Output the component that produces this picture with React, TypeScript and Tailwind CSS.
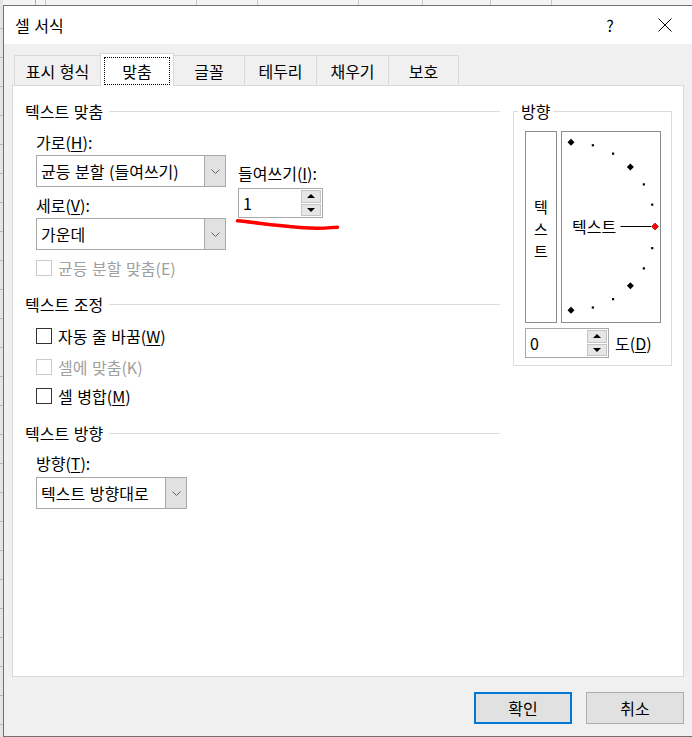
import React from 'react';

const font = "font-['Noto_Sans_CJK_KR','Noto_Sans',sans-serif]";

function Chevron() {
  return (
    <svg width="9" height="5" viewBox="0 0 9 5">
      <polyline points="0.5,0.5 4.5,4.5 8.5,0.5" fill="none" stroke="#606060" strokeWidth="1" />
    </svg>
  );
}

function Arrow({ up }: { up?: boolean }) {
  return (
    <svg width="8" height="4" viewBox="0 0 8 4">
      <polygon points={up ? '0,4 8,4 4,0' : '0,0 8,0 4,4'} fill="#000" />
    </svg>
  );
}

function Select({ value, width }: { value: string; width: string }) {
  return (
    <div className={`flex h-[32px] ${width} border border-[#a9a9a9] bg-white`}>
      <div className="flex flex-1 items-center pl-[4px]">{value}</div>
      <div className="flex w-[21px] items-center justify-center border-l border-[#a9a9a9] bg-[#e1e1e1]">
        <Chevron />
      </div>
    </div>
  );
}

function Spin({ value, width }: { value: string; width: string }) {
  return (
    <div className={`flex h-[30px] ${width} border border-[#a9a9a9] bg-white`}>
      <div className="flex flex-1 items-center pl-[4px]">{value}</div>
      <div className="flex w-[21px] flex-col gap-px py-px pr-px">
        <div className="flex flex-1 items-center justify-center border border-[#c4c4c4] bg-[#e6e6e6]">
          <Arrow up />
        </div>
        <div className="flex flex-1 items-center justify-center border border-[#c4c4c4] bg-[#e6e6e6]">
          <Arrow />
        </div>
      </div>
    </div>
  );
}

function Heading({ text, className }: { text: string; className: string }) {
  return (
    <div className={`flex h-[20px] items-center ${className}`}>
      <span>{text}</span>
      <div className="ml-[6px] h-px flex-1 bg-[#dcdcdc]" />
    </div>
  );
}

function Check({
  label,
  hotkey,
  rest,
  disabled,
  className,
}: {
  label: string;
  hotkey?: string;
  rest?: string;
  disabled?: boolean;
  className: string;
}) {
  return (
    <div className={`flex h-[20px] items-center pl-[11px] ${className}`}>
      <div
        className={`h-[16px] w-[16px] border bg-white ${
          disabled ? 'border-[#cccccc]' : 'border-[#333333]'
        }`}
      />
      <span className={`ml-[6px] ${disabled ? 'text-[#a0a0a0]' : ''}`}>
        {label}
        {hotkey && <span className="underline underline-offset-2">{hotkey}</span>}
        {rest}
      </span>
    </div>
  );
}

function Tab({
  label,
  width,
  noLeft,
  last,
}: {
  label: string;
  width: string;
  noLeft?: boolean;
  last?: boolean;
}) {
  return (
    <div
      className={`mb-px flex h-[30px] ${width} items-center justify-center border-t border-[#d9d9d9] bg-[#f0f0f0] ${
        noLeft ? '' : 'border-l'
      } ${last ? 'border-r' : ''}`}
    >
      {label}
    </div>
  );
}

const smallDots = [75, 60, 30, 15, -15, -30, -60, -75];
const bigDots = [90, 45, -45, -90];

function Dial() {
  const cx = 9;
  const cy = 94.3;
  const r = 84;
  return (
    <div className="relative ml-[4px] h-[192px] w-[100px] border border-[#8c8c8c] bg-white">
      <svg className="absolute inset-0" width="98" height="190" viewBox="0 0 98 190">
        {smallDots.map((a) => {
          const x = cx + r * Math.cos((a * Math.PI) / 180);
          const y = cy - r * Math.sin((a * Math.PI) / 180);
          return <rect key={a} x={x - 1} y={y - 1} width="2.2" height="2.2" fill="#000" />;
        })}
        {bigDots.map((a) => {
          const x = cx + r * Math.cos((a * Math.PI) / 180);
          const y = cy - r * Math.sin((a * Math.PI) / 180);
          return (
            <polygon
              key={a}
              points={`${x},${y - 3.5} ${x + 3.5},${y} ${x},${y + 3.5} ${x - 3.5},${y}`}
              fill="#000"
            />
          );
        })}
        <line x1="58.5" y1="94.5" x2="89" y2="94.5" stroke="#000" strokeWidth="1" />
        <polygon points="93,91 96.5,94.5 93,98 89.5,94.5" fill="#ff0000" stroke="#8a0000" strokeWidth="0.6" />
      </svg>
      <span className="absolute left-[10px] top-[84px] leading-[20px]">텍스트</span>
    </div>
  );
}

export default function App() {
  return (
    <div
      className={`relative h-[737px] w-[692px] overflow-hidden bg-[#ececec] text-[16px] leading-[20px] text-black [word-spacing:1px] ${font}`}
    >
      {/* spreadsheet behind the dialog */}
      <div className="flex h-[5px] bg-[#f4f4f4]">
        <div className="ml-[35px] h-full w-px bg-[#b0b0b0]" />
        <div className="ml-[9px] h-full w-px bg-[#c8c8c8]" />
        <div className="ml-[150px] h-full w-px bg-[#c8c8c8]" />
        <div className="ml-[60px] h-full w-px bg-[#c8c8c8]" />
        <div className="ml-[100px] h-full w-px bg-[#c8c8c8]" />
        <div className="ml-[63px] h-full w-px bg-[#c8c8c8]" />
        <div className="ml-[67px] h-full w-px bg-[#c8c8c8]" />
        <div className="ml-[60px] h-full w-px bg-[#c8c8c8]" />
      </div>
      <div className="absolute left-0 top-0 flex h-full w-[3px] flex-col bg-[#e4e4e4]">
        {Array.from({ length: 25 }).map((_, i) => (
          <div key={i} className="mt-[28px] h-px w-full bg-[#b8b8b8]" />
        ))}
      </div>

      <div className="ml-[3px] flex h-[732px] w-[700px] flex-col border-y border-l border-[#707070]">
        <div className="flex h-[38px] items-center bg-white pl-[11px]">
          <span>셀 서식</span>
          <div className="flex-1" />
          <div className="flex w-[46px] justify-center">?</div>
          <div className="ml-[9px] flex w-[46px] justify-center">
            <svg width="14" height="14" viewBox="0 0 14 14">
              <path d="M0.5 0.5 L13.5 13.5 M13.5 0.5 L0.5 13.5" stroke="#000" strokeWidth="1" />
            </svg>
          </div>
          <div className="w-[15px]" />
        </div>

        <div className="flex flex-1 flex-col bg-[#f0f0f0] pl-[8px] pt-[9px]">
          <div className="relative z-10 -mb-px flex h-[33px] items-end pl-[2px]">
            <Tab label="표시 형식" width="w-[86px]" />
            <div className="flex h-[33px] w-[74px] border-x border-t border-[#d9d9d9] bg-white px-[3px] pb-[1px] pt-[3px]">
              <div className="flex flex-1 items-center justify-center border border-dotted border-black">
                맞춤
              </div>
            </div>
            <Tab label="글꼴" width="w-[70px]" noLeft />
            <Tab label="테두리" width="w-[72px]" />
            <Tab label="채우기" width="w-[72px]" />
            <Tab label="보호" width="w-[71px]" last />
          </div>

          <div className="flex h-[592px] w-[672px] border border-[#d9d9d9] bg-white pl-[12px]">
            <div className="flex w-[475px] flex-col">
              <Heading className="mt-[15px]" text="텍스트 맞춤" />
              <div className="mt-[11px] flex pl-[11px]">
                <div className="flex w-[190px] flex-col">
                  <div className="h-[20px]">
                    가로(<span className="underline underline-offset-2">H</span>):
                  </div>
                  <div className="mt-[3px]">
                    <Select value="균등 분할 (들여쓰기)" width="w-[190px]" />
                  </div>
                  <div className="mt-[8px] h-[20px]">
                    세로(<span className="underline underline-offset-2">V</span>):
                  </div>
                  <div className="mt-[3px]">
                    <Select value="가운데" width="w-[190px]" />
                  </div>
                </div>
                <div className="relative ml-[12px] flex flex-col">
                  <div className="mt-[31px] h-[20px]">
                    들여쓰기(<span className="underline underline-offset-2">I</span>):
                  </div>
                  <div className="mt-[5px]">
                    <Spin value="1" width="w-[85px]" />
                  </div>
                  <svg
                    className="absolute left-[-3px] top-[85px]"
                    width="106"
                    height="14"
                    viewBox="0 0 106 14"
                  >
                    <path
                      d="M2.5 3.8 C 20 5.5, 40 8.5, 65 10.5 S 95 10.2, 102.5 10.2"
                      fill="none"
                      stroke="#ff0000"
                      strokeWidth="3.5"
                      strokeLinecap="round"
                    />
                  </svg>
                </div>
              </div>
              <Check className="mt-[8px]" disabled label="균등 분할 맞춤(E)" />

              <Heading className="mt-[16px]" text="텍스트 조정" />
              <Check className="mt-[12px]" hotkey="W" label="자동 줄 바꿈(" rest=")" />
              <Check className="mt-[11px]" disabled label="셀에 맞춤(K)" />
              <Check className="mt-[9px]" hotkey="M" label="셀 병합(" rest=")" />

              <Heading className="mt-[17px]" text="텍스트 방향" />
              <div className="mt-[10px] h-[20px] pl-[11px]">
                방향(<span className="underline underline-offset-2">T</span>):
              </div>
              <div className="mt-[4px] pl-[11px]">
                <Select value="텍스트 방향대로" width="w-[151px]" />
              </div>
            </div>

            <div className="relative ml-[13px] mt-[25px] h-[255px] w-[159px] border border-[#dcdcdc] pl-[11px] pt-[19px]">
              <span className="absolute left-[4px] top-[-11px] bg-white px-[3px]">방향</span>
              <div className="flex">
                <div className="flex h-[192px] w-[32px] flex-col items-center justify-center border border-[#8c8c8c] pt-[3px] text-[15px] leading-[22px]">
                  <span>텍</span>
                  <span>스</span>
                  <span>트</span>
                </div>
                <Dial />
              </div>
              <div className="mt-[5px] flex items-center">
                <Spin value="0" width="w-[84px]" />
                <span className="ml-[6px]">
                  도(<span className="underline underline-offset-2">D</span>)
                </span>
              </div>
            </div>
          </div>

          <div className="mt-[15px] flex w-[672px] justify-end gap-[14px]">
            <button
              className="flex h-[32px] w-[98px] items-center justify-center border-2 border-[#0078d7] bg-[#e1e1e1]"
              type="button"
            >
              확인
            </button>
            <button
              className="flex h-[32px] w-[98px] items-center justify-center border border-[#adadad] bg-[#e1e1e1]"
              type="button"
            >
              취소
            </button>
          </div>
        </div>
      </div>
    </div>
  );
}
